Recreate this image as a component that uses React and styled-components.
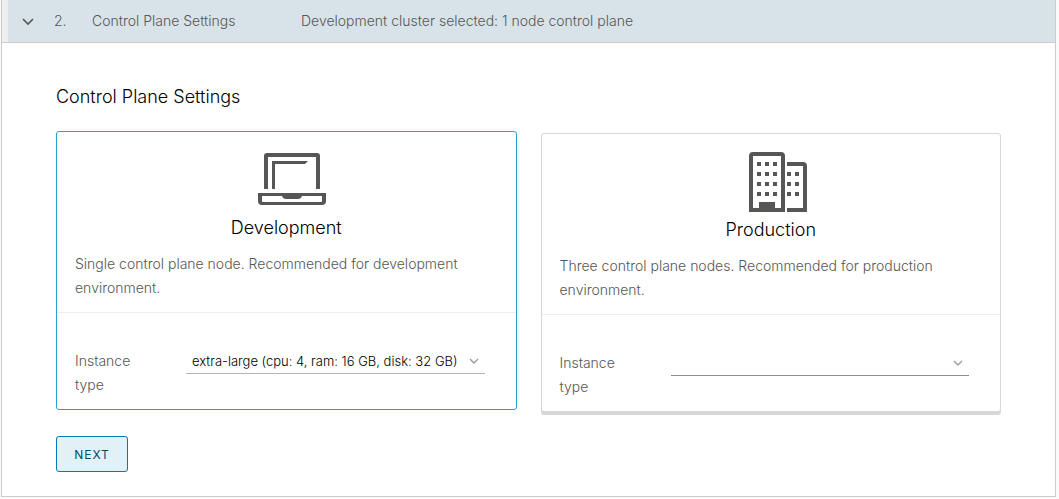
import React, { useState } from "react";
import styled, { createGlobalStyle } from "styled-components";

const GlobalStyle = createGlobalStyle`
  * { box-sizing: border-box; }
  body {
    margin: 0;
    background: #fafafa;
    color: #565656;
    font: 300 14px/24px Inter, "Open Sans", sans-serif;
  }
  button, select { font-family: inherit; }
`;

const Panel = styled.section`
  margin: 0 3px 0 1px;
  background: #fff;
  border: 1px solid #ccc;
  border-top: 0;
`;

const StepHeader = styled.button`
  display: flex;
  align-items: center;
  width: 100%;
  padding: 9px 18px 9px 12px;
  border: 0;
  border-bottom: 1px solid #ccc;
  background: #d8e3e9;
  box-shadow: inset 6px 0 0 #eee;
  padding-left: 18px;
  color: inherit;
  font-size: 14px;
  font-weight: 300;
  line-height: 24px;
  text-align: left;
  cursor: pointer;
`;

const HeaderIcon = styled.svg`
  flex: none;
  width: 16px;
  height: 16px;
`;

const StepNumber = styled.span`
  flex: none;
  width: 38px;
  margin-left: 18px;
`;

const StepTitle = styled.span`
  flex: none;
  width: 209px;
`;

const StepBody = styled.form`
  padding: 42px 54px 24px;
`;

const Heading = styled.h2`
  margin: 0 0 24px;
  color: #000;
  font-size: 18px;
  font-weight: 300;
  line-height: 24px;
`;

const Cards = styled.div`
  display: grid;
  grid-template-columns: 1fr 1fr;
  gap: 24px;
  align-items: start;
  margin-bottom: 24px;
`;

const Card = styled.article`
  border: 1px solid ${(p) => (p.$selected ? "#2b9fd0" : "#d7d7d7")};
  border-radius: 3px;
  background: #fff;
  box-shadow: ${(p) => (p.$selected ? "none" : "0 3px 0 0 #d7d7d7")};
  transform: ${(p) => (p.$selected ? "translateY(-2px)" : "none")};
  cursor: pointer;
`;

const CardBlock = styled.div`
  padding: 12px 18px;
  border-bottom: 1px solid #eee;
`;

const IconSlot = styled.div`
  padding-left: 12px;
`;

const CardIcon = styled.svg`
  display: block;
  width: 72px;
  height: 72px;
  margin: 0 auto;
  fill: #565656;
`;

const CardTitle = styled.h3`
  margin: 0 0 12px;
  color: #000;
  font-size: 18px;
  font-weight: 300;
  line-height: 24px;
  text-align: center;
`;

const CardText = styled.p`
  margin: 0;
`;

const Field = styled.div`
  display: flex;
  align-items: flex-start;
  padding: 36px 31px 12px 18px;
`;

const FieldLabel = styled.label`
  flex: none;
  width: 111px;
  padding-right: 48px;
`;

const SelectBox = styled.div`
  display: grid;
  flex: 1;
  min-width: 0;
  align-items: center;
`;

const Select = styled.select`
  grid-area: 1 / 1;
  width: 100%;
  height: 25px;
  padding: 0 20px 0 6px;
  border: 0;
  border-bottom: 1px solid ${(p) => (p.$filled ? "#b3b3b3" : "#8c8c8c")};
  border-radius: 0;
  outline: 0;
  appearance: none;
  background: transparent;
  color: #000;
  font-size: 13px;
  font-weight: 300;
`;

const SelectArrow = styled.svg`
  grid-area: 1 / 1;
  justify-self: end;
  width: 10px;
  height: 10px;
  margin-right: 6px;
  pointer-events: none;
`;

const NextButton = styled.button`
  min-width: 72px;
  height: 36px;
  padding: 0 16px;
  border: 1px solid #0079b8;
  border-radius: 3px;
  background: #e1f1f6;
  color: #004a70;
  font-size: 12px;
  font-weight: 400;
  letter-spacing: 1px;
  text-transform: uppercase;
  cursor: pointer;
`;

const LaptopIcon = () => (
  <CardIcon viewBox="0 0 72 72" aria-hidden="true">
    <path d="M8 45V12Q8 9 11 9H61Q64 9 64 12V45H60V13H12V45Z" />
    <path d="M16 45V17H52L49 20H19V45Z" />
    <path
      fillRule="evenodd"
      d="M2 49H70V57Q70 61 66 61H6Q2 61 2 57ZM6 52V57Q6 58 7 58H65Q66 58 66 57V52H46Q45 55 42 55H30Q27 55 26 52Z"
    />
  </CardIcon>
);

const BuildingIcon = () => (
  <CardIcon viewBox="0 0 72 72" aria-hidden="true">
    <path
      fillRule="evenodd"
      d="M8 66V10Q8 6 12 6H40Q44 6 44 10V66ZM12 10V62H18V56H34V62H40V10Z"
    />
    <path d="M46 16H62Q66 16 66 20V66H46V62H62V20H46Z" />
    {[16, 26, 36, 46].map((y) =>
      [16, 24, 32].map((x) => <rect key={`${x}-${y}`} x={x} y={y} width="4" height="4" />)
    )}
    {[26, 36, 46].map((y) =>
      [46, 54].map((x) => <rect key={`${x}-${y}`} x={x} y={y} width="4" height="4" />)
    )}
  </CardIcon>
);

const plans = [
  {
    id: "dev",
    title: "Development",
    text: "Single control plane node. Recommended for development environment.",
    Icon: LaptopIcon,
    initial: "extra-large (cpu: 4, ram: 16 GB, disk: 32 GB)",
  },
  {
    id: "prod",
    title: "Production",
    text: "Three control plane nodes. Recommended for production environment.",
    Icon: BuildingIcon,
    initial: "",
  },
];

function PlanCard({ plan, selected, onSelect }) {
  const { id, title, text, Icon, initial } = plan;
  const [value, setValue] = useState(initial);
  return (
    <Card $selected={selected} onClick={onSelect}>
      <CardBlock>
        <IconSlot>
          <Icon />
        </IconSlot>
        <CardTitle>{title}</CardTitle>
        <CardText>{text}</CardText>
      </CardBlock>
      <Field>
        <FieldLabel htmlFor={`${id}-instance`}>Instance type</FieldLabel>
        <SelectBox>
          <Select
            id={`${id}-instance`}
            $filled={value !== ""}
            value={value}
            onChange={(e) => setValue(e.target.value)}
          >
            <option value="" />
            <option>extra-large (cpu: 4, ram: 16 GB, disk: 32 GB)</option>
          </Select>
          <SelectArrow viewBox="0 0 10 10" aria-hidden="true">
            <path d="M1 2L5 6L9 2" fill="none" stroke="#9a9a9a" strokeWidth="1.4" />
          </SelectArrow>
        </SelectBox>
      </Field>
    </Card>
  );
}

export default function App() {
  const [selected, setSelected] = useState("dev");
  return (
    <>
      <GlobalStyle />
      <Panel>
        <StepHeader type="button" aria-expanded="true">
          <HeaderIcon viewBox="0 0 16 16" aria-hidden="true">
            <path d="M3 6L8 11L13 6" fill="none" stroke="#565656" strokeWidth="1.6" />
          </HeaderIcon>
          <StepNumber>2.</StepNumber>
          <StepTitle>Control Plane Settings</StepTitle>
          <span>Development cluster selected: 1 node control plane</span>
        </StepHeader>
        <StepBody onSubmit={(e) => e.preventDefault()}>
          <Heading>Control Plane Settings</Heading>
          <Cards>
            {plans.map((plan) => (
              <PlanCard
                key={plan.id}
                plan={plan}
                selected={selected === plan.id}
                onSelect={() => setSelected(plan.id)}
              />
            ))}
          </Cards>
          <NextButton type="submit">Next</NextButton>
        </StepBody>
      </Panel>
    </>
  );
}
